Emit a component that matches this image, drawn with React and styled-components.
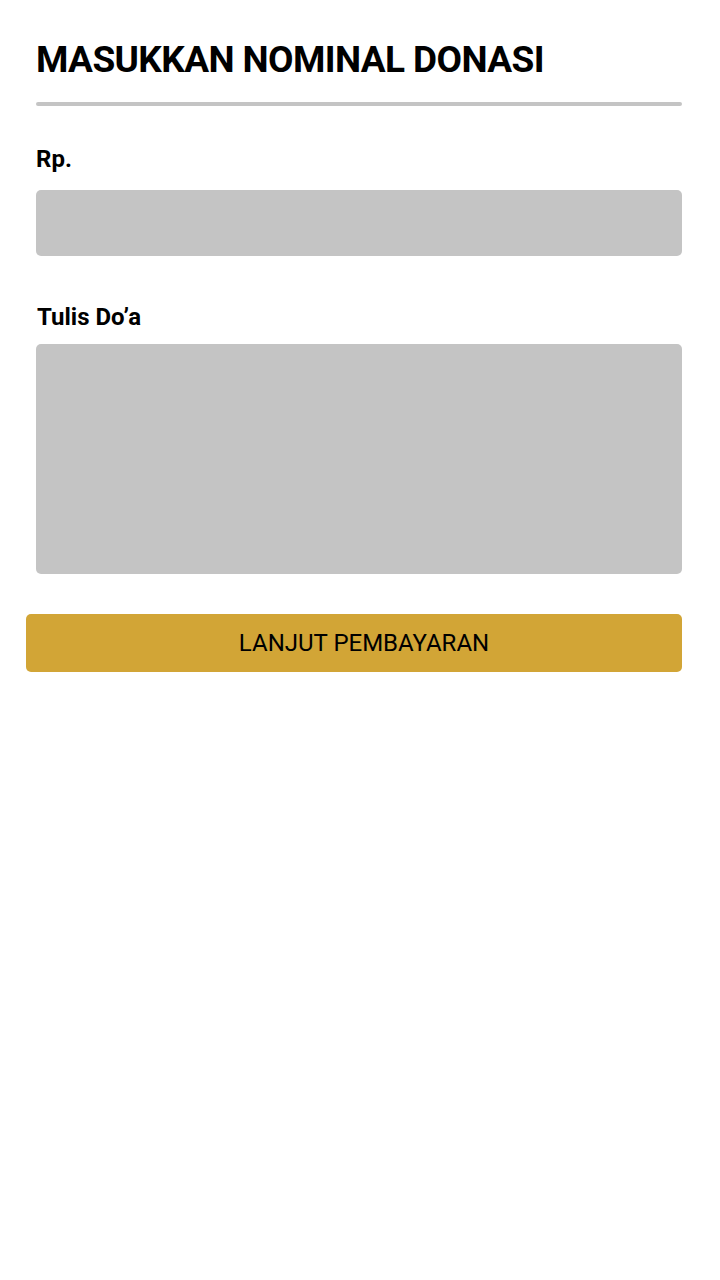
import React from "react";
import styled, { createGlobalStyle } from "styled-components";

const Global = createGlobalStyle`
  html, body { margin: 0; padding: 0; background: #ffffff; }
  body { font-family: Roboto, "Liberation Sans", sans-serif; color: #000; }
  * { box-sizing: border-box; }
`;

const Page = styled.main`
  width: 720px;
  padding: 38px 38px 0 36px;
  display: flex;
  flex-direction: column;
`;

const Title = styled.h1`
  margin: 0;
  font-size: 37px;
  font-weight: 700;
  line-height: 44px;
  letter-spacing: -0.6px;
`;

const Divider = styled.hr`
  margin: 20px 0 0;
  border: none;
  height: 4px;
  border-radius: 2px;
  background: #c4c4c4;
`;

const Label = styled.label`
  display: block;
  font-size: 24px;
  font-weight: 700;
  line-height: 28px;
  margin-top: ${(p) => p.$top}px;
  margin-left: ${(p) => p.$indent || 0}px;
`;

const Field = styled.div`
  margin-top: ${(p) => p.$top}px;
  height: ${(p) => p.$height}px;
  background: #c4c4c4;
  border-radius: 5px;
`;

const Button = styled.button`
  margin: 40px 0 0 -10px;
  height: 58px;
  padding: 0 0 0 20px;
  border: none;
  border-radius: 5px;
  background: #d2a536;
  font-family: Roboto, "Liberation Sans", sans-serif;
  font-size: 24px;
  font-weight: 400;
  color: #000;
  display: flex;
  align-items: center;
  justify-content: center;
  cursor: pointer;
`;

export default function App() {
  return (
    <>
      <Global />
      <Page>
        <Title>MASUKKAN NOMINAL DONASI</Title>
        <Divider />
        <Label $top={39}>Rp.</Label>
        <Field $top={17} $height={66} />
        <Label $top={47} $indent={1}>Tulis Do’a</Label>
        <Field $top={13} $height={230} />
        <Button>LANJUT PEMBAYARAN</Button>
      </Page>
    </>
  );
}
